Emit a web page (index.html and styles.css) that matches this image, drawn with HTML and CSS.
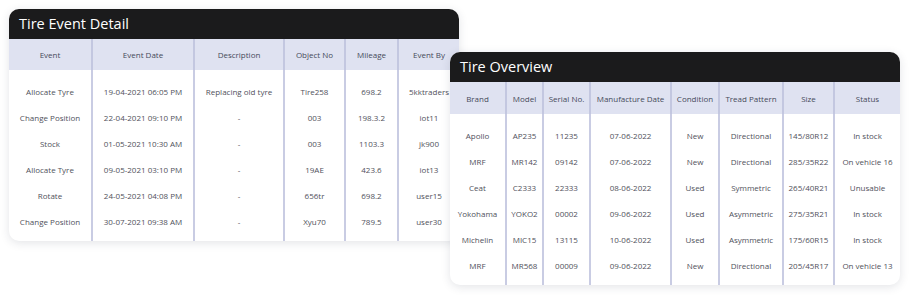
FILE: index.html
```html
<!DOCTYPE html>
<html>
<head>
<meta charset="utf-8">
<link rel="stylesheet" href="styles.css">
</head>
<body>
<div class="canvas">
  <section class="card card-events">
    <h2 class="card-title">Tire Event Detail</h2>
    <table class="grid">
      <colgroup>
        <col style="width:83px"><col style="width:102px"><col style="width:90px"><col style="width:61px"><col style="width:53px"><col style="width:61px">
      </colgroup>
      <thead>
        <tr><th>Event</th><th>Event Date</th><th>Description</th><th>Object No</th><th>Mileage</th><th>Event By</th></tr>
      </thead>
      <tbody>
        <tr><td>Allocate Tyre</td><td>19-04-2021 06:05 PM</td><td>Replacing old tyre</td><td>Tire258</td><td>698.2</td><td>5kktraders</td></tr>
        <tr><td>Change Position</td><td>22-04-2021 09:10 PM</td><td>-</td><td>003</td><td>198.3.2</td><td>iot11</td></tr>
        <tr><td>Stock</td><td>01-05-2021 10:30 AM</td><td>-</td><td>003</td><td>1103.3</td><td>jk900</td></tr>
        <tr><td>Allocate Tyre</td><td>09-05-2021 03:10 PM</td><td>-</td><td>19AE</td><td>423.6</td><td>iot13</td></tr>
        <tr><td>Rotate</td><td>24-05-2021 04:08 PM</td><td>-</td><td>656tr</td><td>698.2</td><td>user15</td></tr>
        <tr><td>Change Position</td><td>30-07-2021 09:38 AM</td><td>-</td><td>Xyu70</td><td>789.5</td><td>user30</td></tr>
      </tbody>
    </table>
  </section>

  <section class="card card-overview">
    <h2 class="card-title">Tire Overview</h2>
    <table class="grid">
      <colgroup>
        <col style="width:56px"><col style="width:37px"><col style="width:47px"><col style="width:81px"><col style="width:48px"><col style="width:64px"><col style="width:51px"><col style="width:66px">
      </colgroup>
      <thead>
        <tr><th>Brand</th><th>Model</th><th>Serial No.</th><th>Manufacture Date</th><th>Condition</th><th>Tread Pattern</th><th>Size</th><th>Status</th></tr>
      </thead>
      <tbody>
        <tr><td>Apollo</td><td>AP235</td><td>11235</td><td>07-06-2022</td><td>New</td><td>Directional</td><td>145/80R12</td><td>In stock</td></tr>
        <tr><td>MRF</td><td>MR142</td><td>09142</td><td>07-06-2022</td><td>New</td><td>Directional</td><td>285/35R22</td><td>On vehicle 16</td></tr>
        <tr><td>Ceat</td><td>C2333</td><td>22333</td><td>08-06-2022</td><td>Used</td><td>Symmetric</td><td>265/40R21</td><td>Unusable</td></tr>
        <tr><td>Yokohama</td><td>YOKO2</td><td>00002</td><td>09-06-2022</td><td>Used</td><td>Asymmetric</td><td>275/35R21</td><td>In stock</td></tr>
        <tr><td>Michelin</td><td>MIC15</td><td>13115</td><td>10-06-2022</td><td>Used</td><td>Asymmetric</td><td>175/60R15</td><td>In stock</td></tr>
        <tr><td>MRF</td><td>MR568</td><td>00009</td><td>09-06-2022</td><td>New</td><td>Directional</td><td>205/45R17</td><td>On vehicle 13</td></tr>
      </tbody>
    </table>
  </section>
</div>
</body>
</html>
```

FILE: styles.css
```css
* { box-sizing: border-box; }
html, body { margin: 0; padding: 0; background: #ffffff; }
body {
  font-family: "Open Sans", "Noto Sans", sans-serif;
  color: #4a4a4a;
}
.canvas {
  position: relative;
  width: 909px;
  height: 295px;
  overflow: hidden;
}
.card {
  position: absolute;
  width: 450px;
  background: #ffffff;
  border-radius: 10px;
  overflow: hidden;
  box-shadow: 0 2px 10px rgba(40, 44, 70, 0.13);
}
.card-events { left: 9px; top: 9px; }
.card-overview { left: 450px; top: 52px; }
.card-title {
  margin: 0;
  height: 30px;
  padding: 0 10px;
  background: #1b1b1c;
  color: #ffffff;
  font-size: 14.5px;
  font-weight: 500;
  line-height: 30px;
  letter-spacing: 0;
}
.grid {
  width: 450px;
  border-collapse: collapse;
  table-layout: fixed;
  font-size: 8px;
}
.grid th, .grid td {
  padding: 0;
  text-align: center;
  white-space: nowrap;
  overflow: visible;
  border-left: 2px solid #c9cce3;
}
.grid th:first-child, .grid td:first-child { border-left: none; }
.grid th {
  height: 31px;
  background: #dfe2f1;
  color: #464a5a;
  font-weight: 500;
  border-left-color: #c3c7e0;
}
.card-overview .grid th { height: 32px; }
.grid td {
  height: 26px;
  color: #50515b;
  font-weight: 400;
}
.grid tbody tr:first-child td { height: 34px; padding-top: 8px; }
.grid tbody tr:last-child td { height: 33px; padding-bottom: 7px; }
```
